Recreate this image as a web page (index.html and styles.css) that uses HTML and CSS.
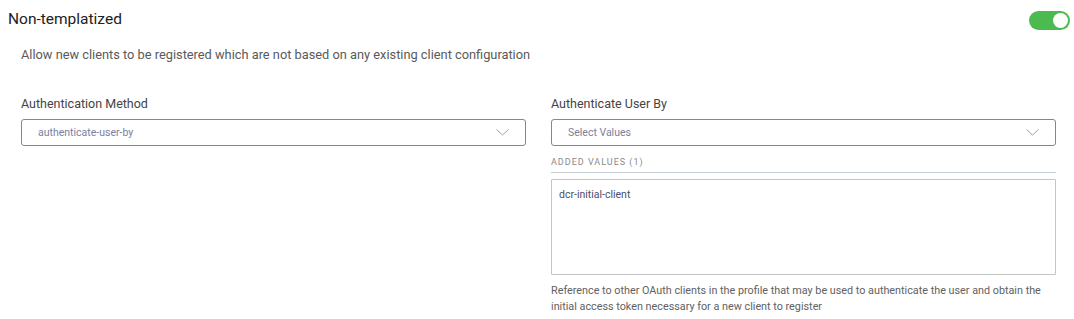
FILE: index.html
```html
<!DOCTYPE html>
<html>
<head>
<meta charset="utf-8">
<link rel="stylesheet" href="styles.css">
</head>
<body>
<div class="page">
  <div class="header">
    <div class="title">Non-templatized</div>
    <div class="toggle"><span class="knob"></span></div>
  </div>
  <div class="desc">Allow new clients to be registered which are not based on any existing client configuration</div>
  <div class="grid">
    <div class="field">
      <div class="label">Authentication Method</div>
      <div class="select">
        <span class="value">authenticate-user-by</span>
        <svg class="chev" width="13" height="7" viewBox="0 0 13 7"><path d="M0.5 0.5 L6.5 6 L12.5 0.5" fill="none" stroke="#9aa0ad" stroke-width="1"/></svg>
      </div>
    </div>
    <div class="field">
      <div class="label">Authenticate User By</div>
      <div class="select">
        <span class="value">Select Values</span>
        <svg class="chev" width="13" height="7" viewBox="0 0 13 7"><path d="M0.5 0.5 L6.5 6 L12.5 0.5" fill="none" stroke="#9aa0ad" stroke-width="1"/></svg>
      </div>
      <div class="added">ADDED VALUES (1)</div>
      <div class="values">
        <div class="item">dcr-initial-client</div>
      </div>
      <div class="help">Reference to other OAuth clients in the profile that may be used to authenticate the user and obtain the initial access token necessary for a new client to register</div>
    </div>
  </div>
</div>
</body>
</html>
```

FILE: styles.css
```css
* { box-sizing: border-box; }
html, body { margin: 0; padding: 0; background: #fff; }
body { font-family: Roboto, "Liberation Sans", Arial, sans-serif; }
.page { width: 1074px; height: 319px; overflow: hidden; }
.header {
  display: flex;
  justify-content: space-between;
  align-items: center;
  padding: 8px 4px 0 8px;
  height: 30px;
}
.title { font-size: 15.5px; color: #222; line-height: 22px; }
.toggle {
  width: 41px; height: 19px; border-radius: 10px;
  background: #4cbb4f;
  display: flex; align-items: center; justify-content: flex-end;
  padding-right: 2px;
  margin-top: 2px;
}
.knob { width: 15px; height: 15px; border-radius: 50%; background: #fff; }
.desc {
  padding-left: 21px;
  margin-top: 16px;
  font-size: 12.8px;
  line-height: 18px;
  color: #5a5a5a;
}
.grid {
  display: grid;
  grid-template-columns: 505px 505px;
  column-gap: 25px;
  padding-left: 21px;
  margin-top: 31px;
}
.label { font-size: 12.5px; line-height: 18px; color: #444; }
.select {
  margin-top: 6px;
  height: 27px;
  border: 1px solid #7f879c;
  border-radius: 3px;
  display: flex; align-items: center; justify-content: space-between;
  padding: 0 16px 0 16px;
}
.value { font-size: 10.5px; color: #7a80a0; }
.chev { display: block; }
.added {
  margin-top: 10px;
  font-size: 9px;
  letter-spacing: 1px;
  color: #8a8a8a;
  line-height: 12px;
  padding-bottom: 4px;
  border-bottom: 1px solid #c5ccd2;
}
.values {
  margin-top: 6px;
  height: 96px;
  border: 1px solid #c4c4c4;
  border-radius: 1px;
  padding: 8px 7px;
}
.item { font-size: 10.5px; color: #4a4f6a; line-height: 14px; }
.help {
  margin-top: 8px;
  font-size: 10.8px;
  line-height: 16px;
  color: #616161;
}
```
